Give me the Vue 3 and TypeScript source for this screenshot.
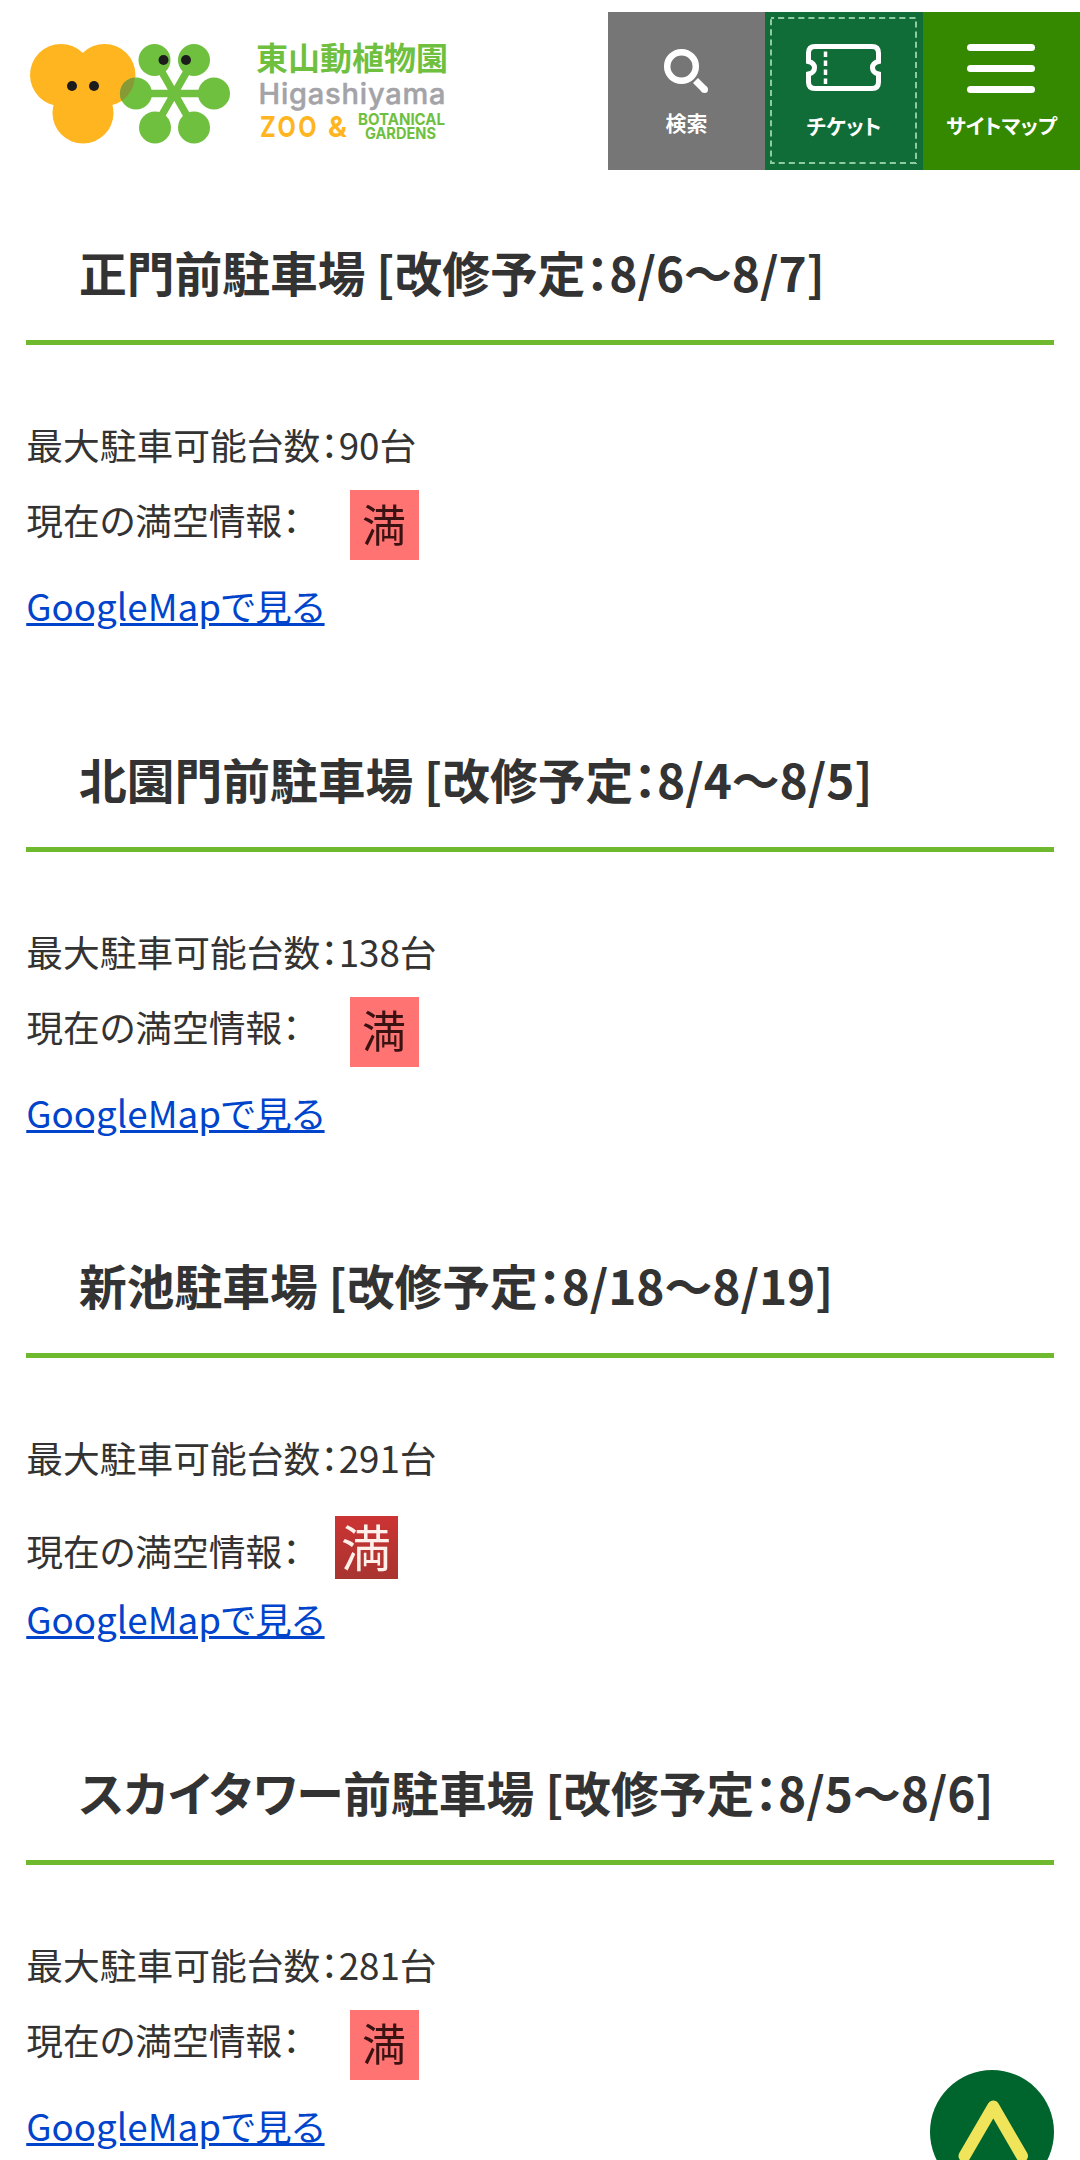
<script setup lang="ts">
interface Lot {
  name: string
  period: string
  capacity: number
  badge: 'light' | 'dark'
}

const lots: Lot[] = [
  { name: '正門前駐車場', period: '8/6～8/7', capacity: 90, badge: 'light' },
  { name: '北園門前駐車場', period: '8/4～8/5', capacity: 138, badge: 'light' },
  { name: '新池駐車場', period: '8/18～8/19', capacity: 291, badge: 'dark' },
  { name: 'スカイタワー前駐車場', period: '8/5～8/6', capacity: 281, badge: 'light' },
]
</script>

<template>
  <div class="page">
    <header class="header">
      <svg class="logo" width="480" height="180" viewBox="0 0 480 180">
        <g fill="#ffb51f">
          <circle cx="61" cy="75" r="31" />
          <circle cx="104.500" cy="75" r="31" />
          <circle cx="83" cy="113" r="30.500" />
        </g>
        <g fill="#70c040">
          <g stroke="#70c040" stroke-width="7.500">
            <path d="M136 93.500H213M155 60L193.500 127M193.500 60L155 127" />
          </g>
          <circle cx="154.500" cy="60" r="16" />
          <circle cx="194" cy="60" r="16" />
          <circle cx="136" cy="93.500" r="16" />
          <circle cx="214" cy="93.500" r="16" />
          <circle cx="155" cy="127.500" r="16" />
          <circle cx="194" cy="127.500" r="16" />
        </g>
        <path d="M134.800 77.600A16 16 0 0 0 121.700 101A31 31 0 0 0 134.800 77.600Z" fill="#889a35" />
        <g fill="#1c1c1c">
          <circle cx="72" cy="86" r="5" />
          <circle cx="94" cy="86" r="5" />
          <circle cx="163.500" cy="60" r="5" />
          <circle cx="186" cy="60" r="5" />
        </g>
        <g class="wordmark">
          <text class="wm-ja" x="256" y="70" textLength="192" lengthAdjust="spacing">東山動植物園</text>
          <text class="wm-en" x="258.500" y="103.500" textLength="187" lengthAdjust="spacing">Higashiyama</text>
          <text class="wm-zoo wide" x="260" y="136.500" textLength="59" lengthAdjust="spacingAndGlyphs">ZOO</text>
          <text class="wm-zoo" x="328" y="136.500" textLength="19" lengthAdjust="spacingAndGlyphs">&amp;</text>
          <text class="wm-bg" x="358" y="124.500" textLength="87" lengthAdjust="spacingAndGlyphs">BOTANICAL</text>
          <text class="wm-bg" x="365" y="138.500" textLength="71" lengthAdjust="spacingAndGlyphs">GARDENS</text>
        </g>
      </svg>
      <nav class="menu">
        <a class="item search">
          <svg class="icon" width="157" height="96" viewBox="608 12 157 96" fill="none" stroke="#fff">
            <circle cx="681.500" cy="66.500" r="14.300" stroke-width="6.500" />
            <path d="M695.500 80.500L704.500 89.500" stroke-width="7" />
            <circle cx="704.500" cy="89.500" r="3.500" fill="#fff" stroke="none" />
          </svg>
          <span class="label">検索</span>
        </a>
        <a class="item ticket">
          <svg class="icon" width="158" height="158" viewBox="765 12 158 158" fill="none" stroke="#fff">
            <rect x="771" y="18" width="145" height="145" stroke="#8fcba0" stroke-width="2" stroke-dasharray="6.100 4" stroke-dashoffset="3" />
            <path
              stroke-width="5"
              d="M815 46.500H872Q878.500 46.500 878.500 53V61.500Q872.500 63 872.500 67.700Q872.500 72.500 878.500 74V82Q878.500 88.500 872 88.500H815Q808.500 88.500 808.500 82V74Q814.500 72.500 814.500 67.700Q814.500 63 808.500 61.500V53Q808.500 46.500 815 46.500Z"
            />
            <path stroke-width="3.500" stroke-dasharray="5.500 3.500" d="M825.500 51.500V84" />
          </svg>
          <span class="label">チケット</span>
        </a>
        <a class="item sitemap">
          <svg class="icon" width="157" height="96" viewBox="923 12 157 96" fill="#fff">
            <rect x="967" y="44" width="68" height="7" rx="3.500" />
            <rect x="967" y="65" width="68" height="7" rx="3.500" />
            <rect x="967" y="86" width="68" height="7" rx="3.500" />
          </svg>
          <span class="label">サイトマップ</span>
        </a>
      </nav>
    </header>

    <main class="main">
      <section v-for="lot in lots" :key="lot.name" class="lot">
        <h2 class="title">{{ lot.name }} [改修予定：{{ lot.period }}]</h2>
        <p class="capacity">最大駐車可能台数：{{ lot.capacity }}台</p>
        <p class="status" :class="lot.badge">
          <span>現在の満空情報：</span>
          <span class="badge"><span class="glyph">満</span></span>
        </p>
        <p class="map"><a class="link">GoogleMapで見る</a></p>
      </section>
    </main>

    <button class="to-top" type="button" aria-label="ページの先頭へ">
      <svg width="124" height="124" viewBox="0 0 124 124">
        <circle cx="62" cy="62" r="62" fill="#00642d" />
        <path d="M34.500 86L63.300 36.500L92 86" fill="none" stroke="#efe45a" stroke-width="12" stroke-linejoin="round" stroke-linecap="round" />
      </svg>
    </button>
  </div>
</template>

<style>
body {
  margin: 0;
  background: #fff;
}
</style>

<style scoped>
.page {
  position: relative;
  width: 1080px;
  height: 2160px;
  overflow: hidden;
  background: #fff;
  color: #333;
  font-family: "Noto Sans CJK JP", sans-serif;
  font-feature-settings: "palt";
}

.header {
  display: flex;
  justify-content: space-between;
  height: 180px;
}

.logo {
  flex: none;
}

.wordmark {
  stroke-linejoin: round;
}

.wm-ja {
  font-size: 32px;
  font-weight: 700;
  font-feature-settings: normal;
  fill: #70c040;
}

.wm-en {
  font-family: Inter, sans-serif;
  font-size: 29px;
  font-weight: 500;
  font-feature-settings: normal;
  fill: #a3a3a8;
  stroke: #a3a3a8;
  stroke-width: 0.5px;
}

.wm-zoo {
  font-family: Inter, sans-serif;
  font-size: 29px;
  font-weight: 700;
  fill: #ffb51f;
}

.wm-zoo.wide {
  letter-spacing: 3px;
}

.wm-bg {
  font-family: Inter, sans-serif;
  font-size: 16px;
  font-weight: 700;
  fill: #70c040;
}

.menu {
  display: flex;
  width: 472px;
  margin-top: 12px;
  height: 158px;
}

.item {
  position: relative;
  flex: 1;
  color: #fff;
  font-size: 21px;
  font-weight: 700;
  line-height: 32px;
  text-align: center;
}

.icon {
  display: block;
}

.search {
  background: #767676;
}

.search .label {
  display: block;
  margin-top: -2px;
}

.ticket {
  background: #116d38;
}

.ticket .label {
  position: absolute;
  left: 0;
  right: 0;
  top: 97px;
}

.sitemap {
  background: #358900;
}

.sitemap .label {
  display: block;
  margin-top: 1px;
  font-size: 20.6px;
}

.main {
  padding: 0 26px;
}

.lot {
  height: 506.67px;
}

.title {
  box-sizing: border-box;
  height: 165px;
  margin: 0;
  padding: 57px 0 0 53px;
  border-bottom: 5px solid #6fb92f;
  font-size: 47.75px;
  font-weight: 700;
  line-height: 70px;
  white-space: nowrap;
}

.capacity,
.status,
.map {
  margin: 0 0 0 0.25px;
  font-size: 36.75px;
  line-height: 60px;
  white-space: nowrap;
}

.capacity {
  padding-top: 69px;
}

.status {
  display: flex;
  height: 76px;
  padding-top: 15px;
  box-sizing: border-box;
}

.badge {
  display: flex;
  align-items: center;
  justify-content: center;
  width: 69px;
  height: 70px;
  margin: 1px 0 0 49px;
  background: #ff7373;
  color: #3a1212;
}

.glyph {
  margin-top: -5px;
  font-size: 44px;
  line-height: 70px;
  filter: blur(0.7px);
}

.status.dark {
  height: 106px;
  padding-top: 33px;
}

.status.dark .badge {
  width: 63px;
  height: 63px;
  margin: -4px 0 0 34px;
  background: linear-gradient(#cc3434, #a83430);
  color: #fff0ea;
}

.status.dark .glyph {
  font-size: 50px;
  line-height: 63px;
}

.map {
  padding-top: 25px;
}

.status.dark + .map {
  padding-top: 0;
  margin-top: -5px;
}

.link {
  color: #0044cc;
  text-decoration: underline;
}

.to-top {
  position: absolute;
  left: 930px;
  top: 2070px;
  padding: 0;
  border: 0;
  background: none;
}

.to-top svg {
  display: block;
}
</style>
